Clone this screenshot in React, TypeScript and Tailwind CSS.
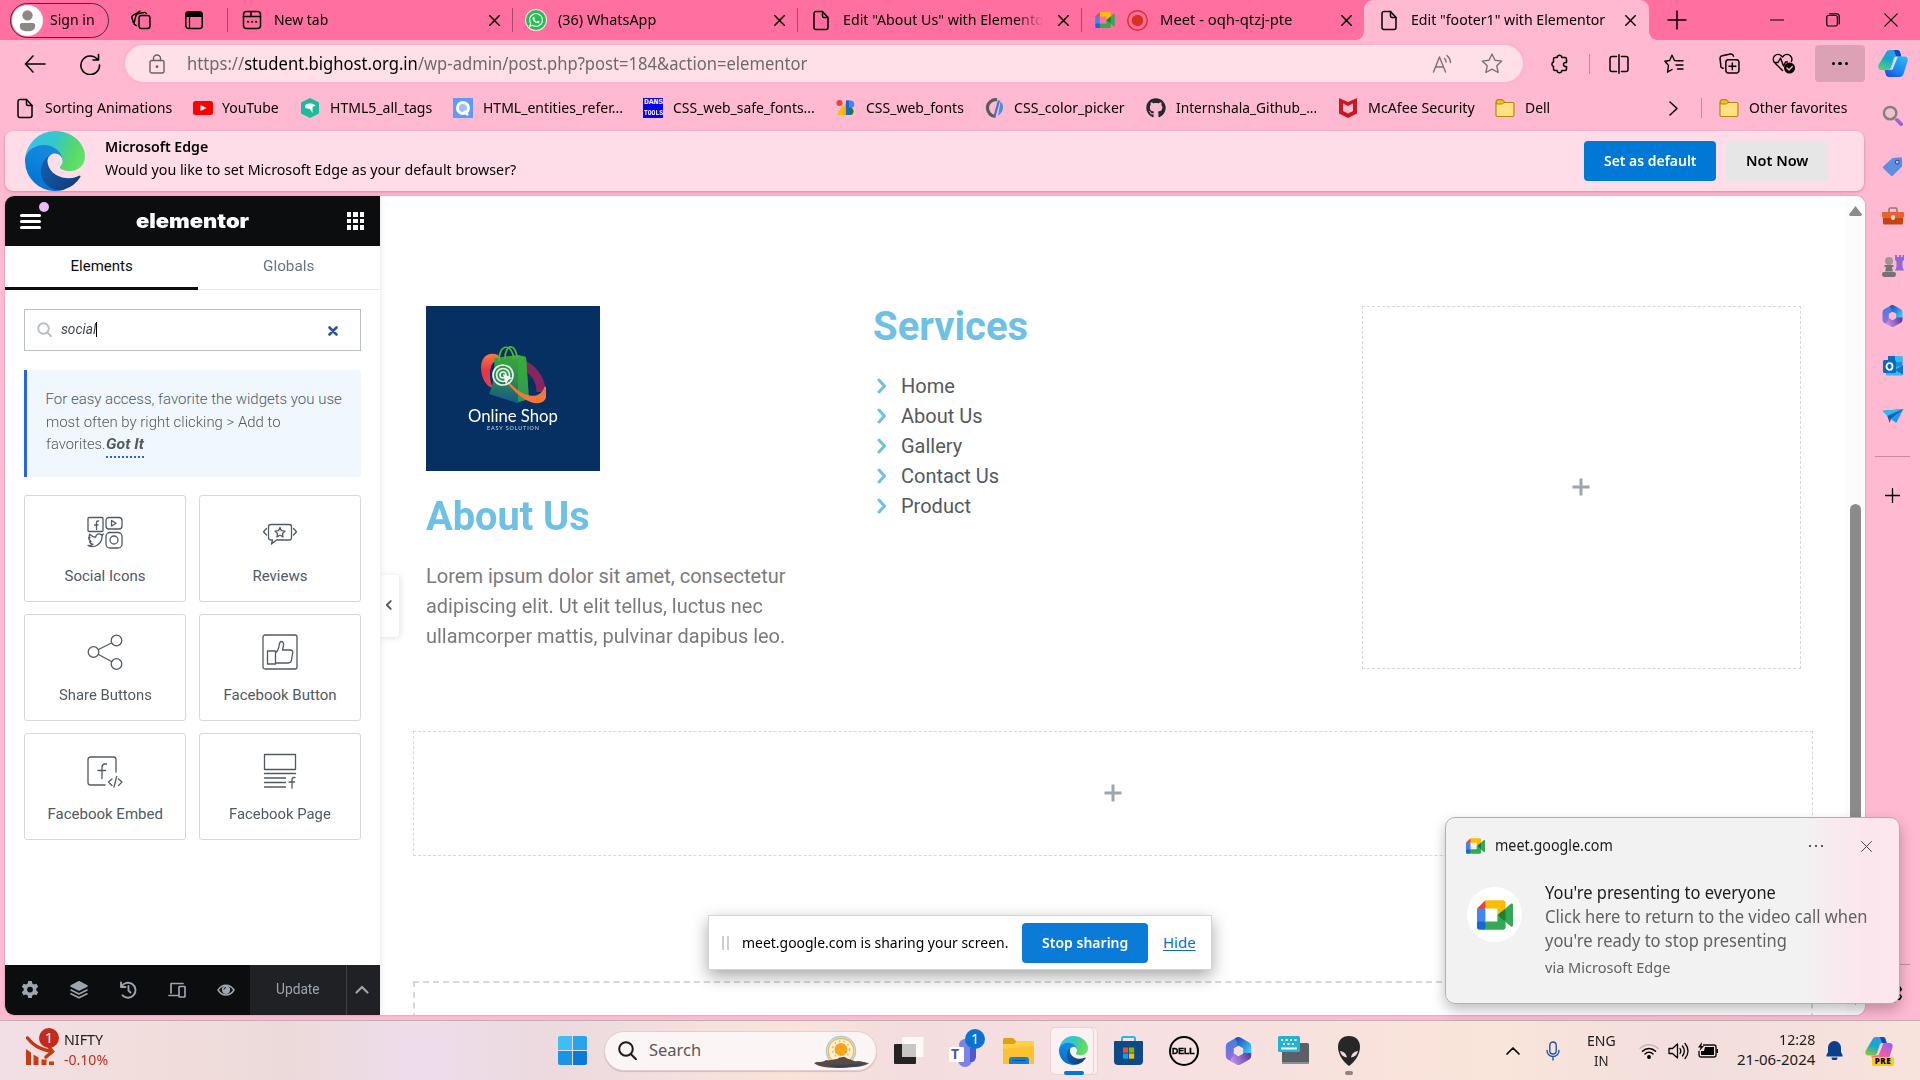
import React, { useLayoutEffect, useRef } from "react";
import { FaGithub, FaWhatsapp } from "react-icons/fa";

/* Single line of text condensed or widened to the width of its box. */
function Fit({ className = "", children }: { className?: string; children: React.ReactNode }) {
  const outer = useRef<HTMLSpanElement>(null);
  const inner = useRef<HTMLSpanElement>(null);
  useLayoutEffect(() => {
    const o = outer.current;
    const i = inner.current;
    if (!o || !i || !i.offsetWidth) return;
    i.style.transform = `scaleX(${o.clientWidth / i.offsetWidth})`;
  }, []);
  return (
    <span ref={outer} className={"fit block shrink-0 whitespace-nowrap " + className}>
      <span ref={inner} className="inline-block origin-left">{children}</span>
    </span>
  );
}

type IconProps = { className?: string; box?: string; sw?: number; children: React.ReactNode };
function Line({ className = "size-5", box = "0 0 20 20", sw = 1.4, children }: IconProps) {
  return (
    <svg viewBox={box} className={"shrink-0 " + className} fill="none" stroke="currentColor" strokeWidth={sw} strokeLinecap="round" strokeLinejoin="round">
      {children}
    </svg>
  );
}

const Cross = ({ className = "size-[11px]" }: { className?: string }) => (
  <Line className={className} box="0 0 11 11" sw={1.5}><path d="M.8.8l9.4 9.4M10.200.8L.8 10.200" /></Line>
);
const Doc = () => (
  <Line className="h-[21px] w-5" box="0 0 20 21" sw={1.5}>
    <path d="M3 3.500a2 2 0 0 1 2-2h6.500l5.500 6v10a2 2 0 0 1-2 2H5a2 2 0 0 1-2-2z" /><path d="M11.500 1.500v4.500a1.500 1.500 0 0 0 1.500 1.500h4" />
  </Line>
);
const Folder = () => (
  <svg viewBox="0 0 20 20" className="size-5 shrink-0">
    <path d="M1 6V3.500A2 2 0 0 1 3 1.500h4.500L9.500 4v2z" fill="#f0c419" stroke="#b8860b" />
    <rect x="1" y="4.500" width="18" height="14" rx="1.500" fill="#ffe083" stroke="#b8860b" strokeWidth="1.200" />
    <path d="M1.500 6h6l2-2-2-2.200H3A1.500 1.500 0 0 0 1.500 3.300z" fill="#f0c419" stroke="#b8860b" />
  </svg>
);

const Edge = ({ className, id }: { className: string; id: string }) => (
  <svg viewBox="0 0 256 256" preserveAspectRatio="none" className={"shrink-0 " + className}>
    <defs>
      <linearGradient id={id + "a"} x1=".2" y1="0" x2="1" y2=".6"><stop stopColor="#1460ad" /><stop offset="1" stopColor="#103f83" /></linearGradient>
      <linearGradient id={id + "b"} x1=".6" y1="0" x2=".3" y2="1"><stop stopColor="#1a8ad8" /><stop offset=".4" stopColor="#0d84dc" /><stop offset="1" stopColor="#0070d0" /></linearGradient>
      <linearGradient id={id + "c"} x1="0" y1=".3" x2="1" y2=".6"><stop stopColor="#35c1f1" /><stop offset=".45" stopColor="#35c8c8" /><stop offset=".8" stopColor="#58d868" /><stop offset="1" stopColor="#62e26a" /></linearGradient>
    </defs>
    <path fill={`url(#${id}a)`} d="M231.050 190.540a93.730 93.730 0 0 1-10.540 4.710 101.870 101.870 0 0 1-35.900 6.460c-47.320 0-88.540-32.550-88.540-74.320A31.480 31.480 0 0 1 112.500 99.900C69.700 101.700 58.700 146.300 58.700 172.440c0 73.880 68.090 81.370 82.760 81.370 7.910 0 19.840-2.300 27-4.560l1.310-.44a128.340 128.340 0 0 0 66.600-52.800 4 4 0 0 0-5.320-5.470z" />
    <path fill={`url(#${id}b)`} d="M105.730 241.420a79.200 79.200 0 0 1-22.740-21.340 80.720 80.720 0 0 1 29.510-120.180c3.120-1.470 8.450-4.130 15.540-4a32.350 32.350 0 0 1 25.690 13 31.880 31.880 0 0 1 6.360 18.660c0-.21 24.460-79.600-80-79.600-43.900 0-80 41.660-80 78.210A130.150 130.150 0 0 0 12.100 182.200a128 128 0 0 0 156.380 67.110 75.550 75.550 0 0 1-62.780-8z" />
    <path fill={`url(#${id}c)`} d="M152.330 148.860c-.81 1.050-3.300 2.500-3.300 5.660 0 2.610 1.700 5.120 4.720 7.230 14.380 10 41.490 8.680 41.560 8.680a59.560 59.560 0 0 0 30.270-8.350A61.380 61.380 0 0 0 256 109.200c.26-22.410-8-37.310-11.340-43.910C223.460 23.840 177.720 0 128 0A128 128 0 0 0 0 126.200c.48-36.540 36.800-66.050 80-66.050 3.500 0 23.460.34 42 10.070 16.340 8.580 24.900 18.940 30.850 29.210 6.180 10.670 7.280 24.150 7.280 29.520s-2.740 13.330-7.800 19.910z" />
  </svg>
);

const Meet = ({ className }: { className: string }) => (
  <svg viewBox="0 0 87.500 72" className={"shrink-0 " + className}>
    <path fill="#188038" d="M49.500 36l8.530 9.750 11.470 7.330 2-17.020-2-16.640-11.690 6.440z" />
    <path fill="#1967d2" d="M0 51.500V66c0 3.315 2.685 6 6 6h14.500l3-10.960-3-9.540-9.950-3z" />
    <path fill="#ea4335" d="M20.500 0L0 20.500l10.550 3 9.950-3 2.950-9.410z" />
    <path fill="#4285f4" d="M20.500 20.500H0v31h20.500z" />
    <path fill="#34a853" d="M82.600 8.680L69.500 19.420v33.660l13.160 10.790c1.970 1.540 4.850.135 4.850-2.370V11c0-2.535-2.945-3.925-4.910-2.320zM49.500 36v15.500h-29V72h43c3.315 0 6-2.685 6-6V53.080z" />
    <path fill="#fbbc04" d="M63.500 0h-43v20.500h29V36l20-16.570V6c0-3.315-2.685-6-6-6z" />
  </svg>
);

const Copilot = ({ className, id, warm = false }: { className: string; id: string; warm?: boolean }) => (
  <svg viewBox="0 0 30 27" className={"shrink-0 " + className}>
    <defs>
      <linearGradient id={id + "a"} x1=".6" y1="0" x2=".2" y2="1"><stop stopColor="#2f9bf0" /><stop offset=".45" stopColor="#10a9c9" /><stop offset="1" stopColor={warm ? "#8cc63f" : "#52d17c"} /></linearGradient>
      <linearGradient id={id + "b"} x1=".8" y1="0" x2=".2" y2="1"><stop stopColor={warm ? "#a35cf0" : "#28b6f6"} /><stop offset=".6" stopColor={warm ? "#f0609a" : "#1a86f2"} /><stop offset="1" stopColor={warm ? "#ff9a52" : "#1c4fd8"} /></linearGradient>
    </defs>
    <path d="M8 2.500A3.500 3.500 0 0 1 11.300 0H19c2 0 2.800 1.300 3.300 3l1 3.500h-4.500c-2 0-2.800 1-3.300 2.700L13 17c-.6 2-1.500 3-3.500 3H3.500C.5 20-.3 17.500.5 15z" fill={`url(#${id}a)`} />
    <path d="M16 0h3c2 0 2.800 1.300 3.300 3l1 3.500h-5z" fill="#1548b8" />
    <path d="M22 27a3.500 3.500 0 0 1-3.300 0H11c-2 0-2.800-1.300-3.300-3l-1.200-4h4c2 0 2.500-1 3-2.700L16 9.500c.6-2 1.500-3 3.500-3h7c3 0 3.800 2.500 3 5L25.300 24.500A3.500 3.500 0 0 1 22 27z" fill={`url(#${id}b)`} />
    <path d="M17 6.800h2.800l-5.300 13H11c1.500-.2 2-1 2.500-2.500z" fill="#ffe6ee" opacity=".85" />
  </svg>
);

const M365 = ({ className, id }: { className: string; id: string }) => (
  <svg viewBox="0 0 26 28" className={"shrink-0 " + className} fill="none" strokeWidth="8" strokeLinejoin="round">
    <defs>
      <linearGradient id={id + "a"} gradientUnits="userSpaceOnUse" x1="6" y1="2" x2="6" y2="24"><stop stopColor="#3f7fe0" /><stop offset="1" stopColor="#9a6ce2" /></linearGradient>
      <linearGradient id={id + "b"} gradientUnits="userSpaceOnUse" x1="10" y1="4" x2="24" y2="14"><stop stopColor="#1f50bd" /><stop offset="1" stopColor="#3ac6f6" /></linearGradient>
      <linearGradient id={id + "c"} gradientUnits="userSpaceOnUse" x1="6" y1="24" x2="24" y2="16"><stop stopColor="#c490ea" /><stop offset="1" stopColor="#5b3c9c" /></linearGradient>
    </defs>
    <path d="M13 4L4.300 9v10L9 21.800" stroke={`url(#${id}a)`} />
    <path d="M21.700 15v4L13 24l-6.500-3.700" stroke={`url(#${id}c)`} />
    <path d="M11.500 4.900L13 4l8.700 5v7" stroke={`url(#${id}b)`} />
  </svg>
);

function Tab({ icon, title, close }: { icon: React.ReactNode; title: React.ReactNode; close?: string }) {
  return (
    <div className="flex h-10 w-full items-center">
      {icon}{title}<Cross className={"ml-auto size-[11px] " + (close ?? "mr-[12px]")} />
    </div>
  );
}

function TabBar() {
  return (
    <div className="flex h-10 shrink-0 items-center bg-[#ff70a0] text-[15px] [&_.fit]:-translate-y-px">
      <div className="ml-[10px] flex h-[35px] w-[99px] items-center rounded-full border-[1.5px] border-[#3c3138]">
        <svg viewBox="0 0 30 30" className="ml-[1px] size-[31px]"><circle cx="15" cy="15" r="15" fill="#fff" /><circle cx="15" cy="10" r="5" fill="#8b8886" /><path d="M7.500 20a2.500 2.500 0 0 1 2.500-2.500h10a2.500 2.500 0 0 1 2.500 2.500c0 3.500-3 5.500-7.500 5.500S7.500 23.500 7.500 20z" fill="#8b8886" /></svg>
        <Fit className="ml-[7px] w-[45px]">Sign in</Fit>
      </div>
      <Line className="ml-[22px] size-5"><rect x="8" y="5.500" width="11" height="13" rx="2.500" /><path d="M5.500 15.500l-1-.3a2.500 2.500 0 0 1-1.300-3L5 5.500a2.500 2.500 0 0 1 1.700-1.700L13 2.500a2 2 0 0 1 2.300 1M2.300 12.500L1 8a2.500 2.500 0 0 1 1.500-3L9 1.200" /></Line>
      <svg viewBox="0 0 20 20" className="ml-[33px] size-5"><rect x="1.800" y="2" width="16.400" height="16.400" rx="2.500" fill="none" stroke="#000" strokeWidth="1.500" /><path d="M1.800 3.500A2.500 2.500 0 0 1 4.300 1.300h11.400a2.500 2.500 0 0 1 2.500 2.500V7H1.800z" /><path d="M5.500 7v11" stroke="#000" strokeWidth="1.300" /></svg>
      <div className="ml-[23px] flex h-6 w-[285px] items-center border-l border-[#a84a6c]">
        <Tab icon={<Line className="ml-[14px] size-5" sw={1.500}><rect x="1.500" y="1.500" width="17" height="17" rx="3" /><path d="M1.500 6.500h17M9 2v4.500" /><path d="M6 11.800h.3M10 11.800h.3M14 11.800h.3" strokeWidth="2" /></Line>} title={<Fit className="ml-[12px] w-[54px]">New tab</Fit>} />
      </div>
      <div className="flex h-6 w-[285px] items-center border-l border-[#a84a6c]">
        <Tab icon={<span className="ml-[13px] flex size-5 items-center justify-center rounded-full bg-[#1fc24c] ring-1 ring-white/80"><FaWhatsapp className="size-4 text-white" /></span>} title={<Fit className="ml-[12px] w-[98px]">(36) WhatsApp</Fit>} />
      </div>
      <div className="flex h-6 w-[284px] items-center border-l border-[#a84a6c]">
        <Tab icon={<span className="ml-[13px] flex"><Doc /></span>} title={<Fit className="ml-[12px] w-[201px] [mask-image:linear-gradient(90deg,#000_85%,transparent_100%)]">Edit "About Us" with Elemento</Fit>} />
      </div>
      <div className="flex h-6 w-[283px] items-center border-l border-[#a84a6c]">
        <Tab icon={<><Meet className="ml-[13px] h-[16px] w-5" /><svg viewBox="0 0 20 20" className="ml-[12px] size-[21px]"><circle cx="10" cy="10" r="9.300" fill="none" stroke="#d93025" strokeWidth="1.300" /><circle cx="10" cy="10" r="5.500" fill="#d93025" /></svg></>} title={<Fit className="ml-[12px] w-[132px]">Meet - oqh-qtzj-pte</Fit>} />
      </div>
      <div className="relative h-10 w-[285px] rounded-t-[9px] bg-[#ffb9d0]">
        <span className="absolute bottom-0 left-[-8px] size-2 bg-[radial-gradient(circle_at_0_0,#ff70a0_7.500px,#ffb9d0_8px)]" />
        <span className="absolute right-[-8px] bottom-0 size-2 bg-[radial-gradient(circle_at_100%_0,#ff70a0_7.500px,#ffb9d0_8px)]" />
        <Tab icon={<span className="ml-[15px] flex"><Doc /></span>} title={<Fit className="ml-[12px] w-[194px]">Edit "footer1" with Elementor</Fit>} close="mr-[13px]" />
      </div>
      <Line className="ml-[18px] size-5" sw={1.500}><path d="M10 1v18M1 10h18" /></Line>
      <Line className="ml-[83px] size-[14px]" box="0 0 14 14" sw={1.200}><path d="M.5 7h13" /></Line>
      <Line className="ml-[42px] size-[14px]" box="0 0 14 14" sw={1.200}><rect x=".8" y="2.500" width="10.500" height="10.500" rx="1.500" /><path d="M3.500.8H11a2.200 2.200 0 0 1 2.200 2.200v8" /></Line>
      <Line className="ml-[44px] size-[14px]" box="0 0 14 14" sw={1.200}><path d="M.8.8l12.400 12.400M13.200.8L.8 13.200" /></Line>
    </div>
  );
}

const Slot = ({ children }: { children: React.ReactNode }) => <div className="flex w-[55px] justify-center">{children}</div>;

function Toolbar() {
  return (
    <div className="flex h-12 shrink-0 items-center bg-[#ffb9d0] pb-px">
      <Line className="ml-[24px] h-[18px] w-[22px]" box="0 0 22 18" sw={1.600}><path d="M21 9H1.500M9 1L1.500 9 9 17" /></Line>
      <Line className="ml-[33px] size-[22px]" box="0 0 22 22" sw={1.600}><path d="M18.500 6.500A9.300 9.300 0 1 0 20.500 12M19.500 1.500v5.500H14" /></Line>
      <div className="ml-[24px] flex h-[37px] w-[1398px] items-center rounded-full bg-[#ffe0e9] shadow-[0_0_4px_rgba(200,80,120,0.150)]">
        <Line className="ml-[24px] h-[20px] w-4 text-[#6b6064]" box="0 0 16 20"><rect x="1" y="6.500" width="14" height="12.500" rx="2" /><path d="M4.500 6.500V4.500a3.500 3.500 0 0 1 7 0v2" /><circle cx="8" cy="12.700" r=".7" fill="currentColor" /></Line>
        <Fit className="ml-[22px] w-[620px] text-[17.500px] text-[#6d6a6c]">https://<span className="text-black">student.bighost.org.in</span>/wp-admin/post.php?post=184&amp;action=elementor</Fit>
        <Line className="ml-auto h-[20px] w-[21px] text-[#7a7174]" box="0 0 21 20"><path d="M1.500 18L7.500 3l6 15M3.500 13h8M12.500 4.500c1 .9 1.500 2 1.600 3.500M15 1.500c2.200 1.900 3.300 4 3.500 7" /></Line>
        <Line className="mr-[20px] ml-[28px] h-[21px] w-[22px] text-[#7a7174]" box="0 0 22 21"><path d="M11 1l3 6.200 6.800.9-5 4.700 1.300 6.700L11 16.200l-6.100 3.300 1.300-6.700-5-4.700L8 7.200z" /></Line>
      </div>
      <Line className="ml-[26px] size-5" sw={1.500}><path d="M7 3.500h1.200a2.300 2.300 0 0 1 4.600 0h3.200a1.500 1.500 0 0 1 1.500 1.500v3.500h-1a2 2 0 0 0 0 4h1V15a1.500 1.500 0 0 1-1.500 1.500h-3.200a2.300 2.300 0 0 1-4.600 0H6A1.500 1.500 0 0 1 4.500 15v-2.500a2.400 2.400 0 0 1 0-4.500V5A1.500 1.500 0 0 1 6 3.500z" /></Line>
      <span className="ml-[20px] h-5 w-px bg-[#c98aa1]" />
      <span className="w-[1.500px]" />
      <Slot><Line sw={1.500}><path d="M7.500 2.500H3a2 2 0 0 0-2 2v11a2 2 0 0 0 2 2h4.500M12.500 2.500H17a2 2 0 0 1 2 2v11a2 2 0 0 1-2 2h-4.500M10 .8v18.400" /></Line></Slot>
      <Slot><Line><path d="M13.500 6.800l-3-.3L8 1.200 5.600 6.500.9 7.200l3.600 4.200-1 6.800L8 15.500M13.500 6.800H19M12 11h7M13.500 15H19" /></Line></Slot>
      <Slot><Line className="size-[21px]"><rect x="6.500" y="6.500" width="12.500" height="12.500" rx="2.500" /><path d="M12.700 9.500v6.500M9.500 12.700H16M4 14.500l-.8-.2a2 2 0 0 1-1.500-2.500L1 5.500a2.500 2.500 0 0 1 2-2.800L11 1a2.500 2.500 0 0 1 2.800 2" /></Line></Slot>
      <Slot><Line className="h-[21px] w-6" box="0 0 24 21"><path d="M10.500 17.500L2.700 9.800A5 5 0 0 1 2.500 3a5 5 0 0 1 7 0l1 1 1-1a5 5 0 0 1 7 0 5 5 0 0 1 .9 5.500M2.500 9.500h3.500L8.500 5l3 8 2-4h2" /><circle cx="17.500" cy="15" r="5.500" fill="#000" stroke="none" /><path d="M15 15l2 2 3.300-3.500" stroke="#ffb9d0" /></Line></Slot>
      <div className="ml-[3.500px] flex h-[37px] w-[50px] items-center justify-center gap-[3px] rounded-[4px] bg-[#dda1b5]"><i className="size-[3.500px] rounded-full bg-black" /><i className="size-[3.500px] rounded-full bg-black" /><i className="size-[3.500px] rounded-full bg-black" /></div>
      <Copilot className="ml-[13px] h-[27px] w-[30px]" id="cp" />
    </div>
  );
}

function Bookmarks() {
  const items: { icon: React.ReactNode; text: string; w: string }[] = [
    { icon: <Doc />, text: "Sorting Animations", w: "w-[127px]" },
    { icon: <svg viewBox="0 0 20 20" className="size-5"><rect y="3" width="20" height="14" rx="2.500" fill="#f00" /><path d="M7.500 7l6 3-6 3z" fill="#fff" /></svg>, text: "YouTube", w: "w-[57px]" },
    { icon: <svg viewBox="0 0 20 20" className="size-5"><path d="M10 0l9 4.500v11L10 20l-9-4.500v-11z" fill="#1abc9c" /><path d="M5 9c0-3 3-4 6-3.500 2 .2 4 1 4.500 2.500-1.500 0-2.500.5-3 1.500v5.500L9.500 10.500C8 11 6 10.500 5 9z" fill="#fff" /></svg>, text: "HTML5_all_tags", w: "w-[102px]" },
    { icon: <svg viewBox="0 0 20 20" className="size-5"><rect width="20" height="20" fill="#5c9cf8" /><circle cx="10" cy="10" r="5.500" fill="#9cc0f8" stroke="#fff" strokeWidth="3" /><path d="M11 13l4 4" stroke="#fff" strokeWidth="2.500" /></svg>, text: "HTML_entities_refer...", w: "w-[140px]" },
    { icon: <span className="flex size-5 flex-col items-center justify-between bg-[#0500f0] font-['Liberation_Mono'] text-[8px] leading-[9px] font-bold text-white"><Fit className="w-[19px]">DANS</Fit><Fit className="w-[19px]">TOOLS</Fit></span>, text: "CSS_web_safe_fonts...", w: "w-[142px]" },
    { icon: <svg viewBox="0 0 20 20" className="size-5"><circle cx="3.500" cy="5" r="3" fill="#ea4335" /><path d="M1 17L7 6l3 11z" fill="#fbbc04" /><path d="M6.500 17l3-13H13v13z" fill="#f9ab00" /><path d="M10 2.500h4.500a3.700 3.700 0 0 1 0 7.500H10z" fill="#4285f4" /><path d="M10 9.500h5a4 4 0 0 1 0 7.500h-5z" fill="#188038" /><path d="M10 2.500h3V17h-3z" fill="#1967d2" /></svg>, text: "CSS_web_fonts", w: "w-[98px]" },
    { icon: <svg viewBox="0 0 20 20" className="size-5" fill="none"><path d="M12 1.800a8.300 8.300 0 1 0-1.500 16.500" stroke="#5a5a5e" strokeWidth="3.200" /><path d="M14 2.500L9.500 18.500" stroke="#3d78c8" strokeWidth="2.200" /><path d="M15.500 3.500c4 3 3.500 10-2.500 14.500z" fill="#4a90d8" /></svg>, text: "CSS_color_picker", w: "w-[111px]" },
    { icon: <FaGithub className="size-5 text-[#24292f]" />, text: "Internshala_Github_...", w: "w-[141px]" },
    { icon: <svg viewBox="0 0 20 20" className="size-5"><path d="M1 0l9 4 9-4v15.500L10 20l-9-4.500z" fill="#c8191f" /><path d="M5 5.500l5 2.500 5-2.500v7.500L10 15.500 5 13z" fill="#ffb9d0" /></svg>, text: "McAfee Security", w: "w-[107px]" },
    { icon: <Folder />, text: "Dell", w: "w-[25px]" },
  ];
  return (
    <div className="flex h-[43px] items-center gap-[20.800px] pb-[3px] pl-[15px] text-[15px] [&_.fit]:-translate-y-px">
      {items.map((b) => (
        <div key={b.text} className="flex items-center gap-[9.800px]">{b.icon}<Fit className={b.w}>{b.text}</Fit></div>
      ))}
      <Line className="ml-auto h-[15px] w-[9px]" box="0 0 9 15" sw={1.500}><path d="M1 1l7 6.500L1 14" /></Line>
      <span className="ml-[2px] h-5 w-px bg-[#c98aa1]" />
      <div className="mr-[18px] ml-[-4px] flex items-center gap-[10px]"><Folder /><Fit className="w-[98px]">Other favorites</Fit></div>
    </div>
  );
}

function InfoBar() {
  return (
    <div className="ml-[5px] flex h-[60px] w-[1859px] shrink-0 items-center rounded-[8px] bg-[#ffdde8] text-[15px] shadow-[0_1px_3px_rgba(120,40,70,0.350)]">
      <Edge className="ml-5 size-[60px]" id="e1" />
      <div className="ml-5 flex flex-col gap-px pb-[7px]">
        <Fit className="w-[103px] leading-[22px] font-semibold">Microsoft Edge</Fit>
        <Fit className="w-[411px] leading-[22px]">Would you like to set Microsoft Edge as your default browser?</Fit>
      </div>
      <div className="mr-[36px] ml-auto flex gap-[10px] font-semibold [&_.fit]:-translate-y-px">
        <div className="flex h-10 w-[132px] items-center justify-center rounded-[4px] bg-[#0078d6] text-white"><Fit className="w-[93px]">Set as default</Fit></div>
        <div className="flex h-10 w-[102px] items-center justify-center rounded-[4px] bg-[#e6e6e6]"><Fit className="w-[62px]">Not Now</Fit></div>
      </div>
    </div>
  );
}

const widgets: { name: string; w: string; icon: React.ReactNode }[] = [
  { name: "Social Icons", w: "w-[81px]", icon: <><rect x="1" y="2.500" width="15" height="14" rx="1" /><path d="M11.500 6h-.5a1.500 1.500 0 0 0-1.500 1.500v7M7.500 10h3.500" /><rect x="19" y="2.500" width="16" height="11.500" rx="3" /><path d="M24.500 5.500v5.500l4.500-2.700z" /><rect x="19" y="17.500" width="16" height="15.500" rx="4" /><circle cx="27" cy="25" r="4" /><path d="M1 30.500c2.500.3 4-.2 5-1.200-2-.3-3-1.300-3.300-2.800H4C2.500 25.500 1.500 24 1.700 22.500l1.300.3c-1-1.500-1.200-2.500-.3-3.500 2 2 4 2.800 6 3 0-3 3.500-4.500 5.500-2.500l2-.8-1.200 2.300c.2 7.500-7.500 12.500-14 9.200z" /></> },
  { name: "Reviews", w: "w-[55px]", icon: <><path d="M9 9.500h18a2.500 2.500 0 0 1 2.500 2.500v10.500A2.500 2.500 0 0 1 27 25H14.500L9.500 29l1-4H9a2.500 2.500 0 0 1-2.500-2.500V12A2.500 2.500 0 0 1 9 9.500zM4.500 13.500l-3 3.200 3 3.300M31.500 13.500l3 3.200-3 3.300" /><path d="M18 12.500l1.500 3.200 3.500.4-2.500 2.400.6 3.400L18 20.200l-3.100 1.700.6-3.400L13 16.100l3.500-.4z" /></> },
  { name: "Share Buttons", w: "w-[93px]", icon: <><circle cx="6.500" cy="18" r="5.300" /><circle cx="29.500" cy="6.500" r="5.300" /><circle cx="29.500" cy="30" r="5.300" /><path d="M11.500 15.500L24.500 9M11.500 20.500l13 7" /></> },
  { name: "Facebook Button", w: "w-[113px]", icon: <><rect x="1" y="1" width="34" height="34" rx="2" /><path d="M5.500 17h8v13h-8zM13.500 19c3-2 3-4 3.500-7 .3-2.500 1-4.500 2.500-4.500 2 0 2.500 2.500 1.800 5l-.8 3.500h8c1.500 0 2.500 1 2.300 2.500L29.500 26c-.3 2-1.300 3-3.300 3H13.500" /></> },
  { name: "Facebook Embed", w: "w-[115px]", icon: <><path d="M18 32H3.500A2.500 2.500 0 0 1 1 29.500v-23A2.500 2.500 0 0 1 3.500 4h23A2.500 2.500 0 0 1 29 6.500V19" /><path d="M19.500 11h-1.500a3 3 0 0 0-3 3v11.500M11 17.500h7.500M25 26l-3.500 3 3.500 3.500M31.500 26l3.500 3-3.500 3.500M29.700 23.500L27 34" /></> },
  { name: "Facebook Page", w: "w-[102px]", icon: <><path d="M2.500 1.500h31v15h-31zM2.500 20.500h31M2.500 25h21M2.500 29.500h21M2.500 34h21M33 24.500h-1a2 2 0 0 0-2 2V35M27 29h5.500" /></> },
];

function Panel() {
  return (
    <div className="z-10 flex w-[375px] shrink-0 flex-col bg-white font-['Roboto'] shadow-[0_0_6px_rgba(0,0,0,0.120)]">
      <div className="relative flex h-[50px] items-center justify-between bg-[#0c0d0e] pr-4 pl-[15px] text-white">
        <div className="flex w-[21px] flex-col gap-[3px]"><i className="h-[3px] rounded bg-white" /><i className="h-[3px] rounded bg-white" /><i className="h-[3px] rounded bg-white" /></div>
        <span className="absolute top-[6px] left-[34px] size-[10px] rounded-full bg-[#f0b8fa]" />
        <Fit className="-mt-px -ml-[3px] w-[113px] font-['Inter'] text-[20px] font-black">elementor</Fit>
        <div className="grid grid-cols-3 gap-[2px]">{Array.from({ length: 9 }, (_, i) => <i key={i} className="size-[4.500px] bg-white" />)}</div>
      </div>
      <div className="flex h-[44px] text-[15px]">
        <div className="flex w-[193px] justify-center border-b-[3px] border-[#0c0d0e] pt-[9px] text-[#0c0d0e]"><Fit className="w-[62px]">Elements</Fit></div>
        <div className="flex grow justify-center border-b border-[#e6e8ea] pt-[9px] pr-px text-[#69727d]"><Fit className="w-[51px]">Globals</Fit></div>
      </div>
      <div className="mx-[19px] mt-[19px] flex h-[42px] items-center border border-[#babfc5]">
        <Line className="mr-[9px] mb-px ml-[12px] size-[15px] text-[#babfc5]" box="0 0 15 15" sw={1.900}><circle cx="6.500" cy="6.500" r="5.300" /><path d="M10.800 11l3 3" /></Line>
        <Fit className="w-[35px] pb-px text-[14.500px] text-[#3f444b] italic">social</Fit>
        <span className="mb-[2px] h-[15px] w-px bg-black" />
        <Line className="mt-[2px] mr-[22px] ml-auto size-[10px] text-[#2f5594]" box="0 0 10 10" sw={2.600}><path d="M1.500 1.500l7 7M8.500 1.500l-7 7" /></Line>
      </div>
      <div className="mx-[19px] mt-[19px] h-[107px] rounded-r-[3px] border-l-[3px] border-[#2563eb] bg-[#f0f7ff] pt-[18px] pl-[18.500px] text-[15px] leading-[22.500px] font-light text-[#515962]">
        <Fit className="w-[296px]">For easy access, favorite the widgets you use</Fit>
        <Fit className="w-[235px]">most often by right clicking &gt; Add to</Fit>
        <div className="flex"><Fit className="w-[60px]">favorites.</Fit><Fit className="h-[25px] w-[38px] border-b-2 border-dotted border-[#2563eb] font-bold italic">Got It</Fit></div>
      </div>
      <div className="mx-[19px] mt-[18px] grid grid-cols-2 gap-x-[13px] gap-y-[12.500px]">
        {widgets.map((w) => (
          <div key={w.name} className="flex h-[106.500px] flex-col items-center rounded-[3px] border border-[#d5d8dc] pt-[18.500px] text-[15px] text-[#515962]">
            <Line className="size-9" box="0 0 36 36" sw={1.300}>{w.icon}</Line>
            <Fit className={"mt-[14px] " + w.w}>{w.name}</Fit>
          </div>
        ))}
      </div>
      <div className="mt-auto flex h-[50px] items-center bg-[#0c0d0e] text-[#9da5ae]">
        <div className="flex w-[49px] justify-center pb-px"><svg viewBox="0 0 18 18" className="size-[18px]" fill="currentColor"><path fillRule="evenodd" d="M7.200 0h3.600l.5 2.500 1.700 1L15.400 2.700l1.800 3.100-1.900 1.700v2l1.900 1.700-1.800 3.100-2.400-.8-1.700 1-.5 2.500H7.200l-.5-2.500-1.700-1-2.400.8L.8 11.200l1.900-1.700v-2L.8 5.800l1.800-3.100 2.400.8 1.700-1zM9 5.700a2.900 2.900 0 1 0 0 5.800 2.900 2.900 0 0 0 0-5.800z" /></svg></div>
        <div className="flex w-[49px] justify-center pb-px"><Line className="size-[18px]" box="0 0 18 18" sw={1.600}><path d="M9 .8L17 5 9 9 1 5z" fill="currentColor" /><path d="M1 9l8 4 8-4M1 12.800l8 4 8-4" /></Line></div>
        <div className="flex w-[49px] justify-center pb-px"><Line className="size-[18px]" box="0 0 18 18" sw={1.900}><path d="M2.500 5.500a7.500 7.500 0 1 1 1 8.800M2 1.500v4.500h4.500M9.500 5v4.500l2 2" /></Line></div>
        <div className="flex w-[49px] justify-center pb-px"><Line className="size-[18px]" box="0 0 18 18" sw={1.700}><path d="M3 12V2.500h12M1 14.500h8.500" /><rect x="11" y="5.500" width="6" height="10.500" rx=".5" /></Line></div>
        <div className="flex w-[49px] justify-center pb-px"><svg viewBox="0 0 18 18" className="size-[18px]"><path d="M1 9c4-6.500 12-6.500 16 0-4 6.500-12 6.500-16 0z" fill="none" stroke="currentColor" strokeWidth="1.500" /><circle cx="9" cy="8.800" r="4.200" fill="currentColor" /><path d="M7 8.500A2 2 0 0 1 9 6.500" stroke="#0c0d0e" fill="none" /></svg></div>
        <div className="flex h-full w-[96px] items-center justify-center bg-[#1f2124] pb-px text-[15px]"><Fit className="w-[44px]">Update</Fit></div>
        <div className="flex h-full w-[34px] items-center justify-center border-l border-[#3f444b] bg-[#1f2124] pr-[3px] pb-[2px]"><Line className="h-[9px] w-[14px]" box="0 0 14 9" sw={2.200}><path d="M1.500 7.500L7 2l5.500 5.500" /></Line></div>
      </div>
    </div>
  );
}

const Logo = () => (
  <div className="flex h-[165px] w-[174px] flex-col items-center bg-[#053061] pt-[39px] text-white">
    <svg viewBox="0 0 66 60" className="h-[60px] w-[66px]">
      <defs>
        <linearGradient id="ring" x1="0" y1="0" x2="0" y2="1"><stop stopColor="#ff7a3c" /><stop offset=".5" stopColor="#e8324a" /><stop offset="1" stopColor="#e0405a" /></linearGradient>
        <linearGradient id="bag" x1=".5" y1="0" x2=".4" y2="1"><stop stopColor="#3aa83c" /><stop offset=".5" stopColor="#2c8c4c" /><stop offset="1" stopColor="#14568c" /></linearGradient>
      </defs>
      <path d="M18 10C9 6 1 11 1 23c0 9 5 19 12 20-3-6-4-15-2-21 1-4 4-7 9-8z" fill="url(#ring)" />
      <path d="M44 20c11 6 17 16 17 27" fill="none" stroke="#8a2460" strokeWidth="9" />
      <path d="M14 13l24-3 8 2 3 42-12 4-28-9c5-10 6-24 5-36z" fill="url(#bag)" />
      <path d="M38 10l8 2 3 42-11 3z" fill="#38b03c" opacity=".65" />
      <path d="M19 16C19-2 32-2 34 14M25 14c0-16 11-16 12-1" fill="none" stroke="#55b436" strokeWidth="1.700" />
      <path d="M65.500 42c4 22-17 20-37-4 11 13 24 16 31 12 4-2 5-5 6-8z" fill="#f5763c" stroke="#f5763c" strokeWidth="2" />
      <g fill="none" stroke="#e8f4ee" strokeWidth="1.700"><circle cx="23" cy="30" r="10" /><circle cx="23" cy="30" r="6.500" /><circle cx="23" cy="30" r="3" /></g>
      <path d="M23 29l9 4-4 2-2 5z" fill="#fff" />
    </svg>
    <Fit className="mt-px w-[90px] font-['Lato'] text-[16.500px] leading-[20px]">Online Shop</Fit>
    <Fit className="-mt-px w-[53px] font-['Lato'] text-[6px] leading-[6px] tracking-[1px] text-white/80">EASY SOLUTION</Fit>
  </div>
);

const Plus = () => <Line className="mr-px mb-[2px] size-[18px] text-[#9da5ae]" box="0 0 18 18" sw={3}><path d="M9 .5v17M.5 9h17" strokeLinecap="butt" /></Line>;

function Canvas() {
  return (
    <div className="relative grow overflow-hidden bg-white font-['Roboto'] text-[20px]">
      <div className="flex pt-[110px] pl-[46px]">
        <div className="w-[448px]">
          <Logo />
          <Fit className="mt-[22px] w-[164px] text-[40px] leading-[48px] font-bold text-[#6ec1e4]">About Us</Fit>
          <div className="mt-[20px] leading-[30px] text-[#7a7a7a]">
            <Fit className="w-[359px]">Lorem ipsum dolor sit amet, consectetur</Fit>
            <Fit className="w-[337px]">adipiscing elit. Ut elit tellus, luctus nec</Fit>
            <Fit className="w-[359px]">ullamcorper mattis, pulvinar dapibus leo.</Fit>
          </div>
        </div>
        <div className="-mt-[3px] w-[488px]">
          <Fit className="-ml-px w-[155px] text-[40px] leading-[48px] font-bold text-[#6ec1e4]">Services</Fit>
          <ul className="mt-[20px] leading-[30px] text-[#54595f]">
            {[["Home", "w-[54px]"], ["About Us", "w-[82px]"], ["Gallery", "w-[61px]"], ["Contact Us", "w-[98px]"], ["Product", "w-[70px]"]].map(([t, w]) => (
              <li key={t} className="flex items-center">
                <Line className="mr-[14px] ml-[3px] h-[16px] w-[10px] text-[#6ec1e4]" box="0 0 10 16" sw={3}><path d="M2 2l5.500 6L2 14" /></Line>
                <Fit className={w}>{t}</Fit>
              </li>
            ))}
          </ul>
        </div>
        <div className="flex h-[363px] w-[439px] items-center justify-center border border-dashed border-[#d5d8dc]"><Plus /></div>
      </div>
      <div className="mt-[62px] ml-[33px] flex h-[125px] w-[1400px] items-center justify-center border border-dashed border-[#d5d8dc]"><Plus /></div>
      <div className="mt-[125px] ml-[33px] h-[60px] w-[1400px] border-2 border-dashed border-[#d5d8dc]" />
      <div className="absolute top-[379px] left-0 flex h-[62px] w-[19px] items-center justify-center rounded-r-[3px] bg-white pr-[2px] pb-[3px] shadow-[1px_1px_6px_rgba(0,0,0,0.120)]"><Line className="h-[10px] w-[7px] text-[#515962]" box="0 0 6 9" sw={1.700}><path d="M5 1L1.500 4.500 5 8" /></Line></div>
    </div>
  );
}

function SideBar() {
  return (
    <div className="flex w-[55px] flex-col items-center pt-[2px] [&>div]:flex [&>div]:h-[50px] [&>div]:items-center">
      <div><svg viewBox="0 0 22 22" className="size-[21px]"><circle cx="8.500" cy="8.500" r="6.500" fill="#eec3d1" stroke="#85807f" strokeWidth="2.600" /><path d="M14 14.500l1.500 1.500" stroke="#777" strokeWidth="2" /><path d="M16 16l4 4" stroke="#9a63dc" strokeWidth="4" strokeLinecap="round" /></svg></div>
      <div><svg viewBox="0 0 22 22" className="mt-[2px] size-[21px]"><path d="M11 2l8.500-.8A1.500 1.500 0 0 1 21 2.700V11l-9.500 9.500a1.500 1.500 0 0 1-2.300 0L1.500 13a1.500 1.500 0 0 1 0-2.200z" fill="#5c8fe2" /><circle cx="16" cy="6.500" r="2" fill="#b8c8f0" stroke="#34489c" strokeWidth="1.200" /></svg></div>
      <div><svg viewBox="0 0 22 18" className="mt-[2px] h-[18px] w-[22px]"><path d="M7 5V2.500A1.500 1.500 0 0 1 8.500 1h5A1.500 1.500 0 0 1 15 2.500V5" fill="none" stroke="#8a7c7c" strokeWidth="1.600" /><rect y="5" width="22" height="5.500" rx="1" fill="#e8622a" /><path d="M1 10.500h20V16a1.500 1.500 0 0 1-1.500 1.500h-17A1.500 1.500 0 0 1 1 16z" fill="#c8420f" /><rect x="9" y="8" width="4" height="5" rx="2" fill="#ddd" /></svg></div>
      <div><svg viewBox="0 0 22 22" className="mt-[2px] size-[22px]"><path d="M13 0h2v2h2V0h2v2h1.500V0H22v5l-1.500 1.500V12L22 15.500h-9L14.500 12V6.500L13 5z" fill="#9268d8" /><circle cx="7" cy="6" r="4" fill="#9a9896" /><path d="M2.500 10h9v2H10l.8 4.500H3.200L4 12H2.500zM0 19a2 2 0 0 1 2-2h10a2 2 0 0 1 2 2c0 2-1 3-2 3H2c-1 0-2-1-2-3z" fill="#757371" /></svg></div>
      <div><M365 className="mt-[2px] h-[22px] w-[21px]" id="m1" /></div>
      <div><svg viewBox="0 0 20 20" className="mt-[2px] size-5"><path d="M5 0h13a1.500 1.500 0 0 1 1.500 1.500V12H5z" fill="#1490df" /><path d="M5 0h7v6H5z" fill="#0f6cbd" /><path d="M12 0h6a1.500 1.500 0 0 1 1.500 1.500V6H12z" fill="#32bdf5" /><path d="M3 19.500V14l17-5v9a1.500 1.500 0 0 1-1.500 1.500z" fill="#35b8f1" /><path d="M20 9v9.500L12 14z" fill="#1373c9" /><rect y="4" width="13" height="13" rx="1.500" fill="#0a68c0" /><ellipse cx="6.500" cy="10.500" rx="3" ry="3.300" fill="none" stroke="#fff" strokeWidth="1.800" /></svg></div>
      <div><svg viewBox="0 0 22 18" className="mt-[2px] h-[17px] w-[22px]"><path d="M0 3L22 1 14.500 16 8 11z" fill="#1e9be8" /><path d="M0 3L22 1 5 8.500z" fill="#35b4f0" /><path d="M5 8.500L22 1 9 11l-1.500 5z" fill="#0b62ae" /></svg></div>
      <span className="mt-[16px] h-px w-[35px] shrink-0 bg-[#c98aa1]" />
      <Line className="mt-[31px] size-[15px]" box="0 0 15 15" sw={1.300}><path d="M7.500.5v14M.5 7.500h14" /></Line>
      <span className="mt-[461px] h-px w-[35px] shrink-0 bg-[#c98aa1]" />
      <Line className="mt-[18px] size-5" sw={1.500}><circle cx="10" cy="10" r="3" /><path d="M8.500 1h3l.5 2.500 1.800 1L16.500 3.500l1.800 3-1.900 2v3l1.900 2-1.800 3-2.700-1-1.800 1-.5 2.500h-3" /></Line>
    </div>
  );
}

function SharePopup() {
  return (
    <div className="absolute top-[915px] left-[708px] z-20 flex h-[55px] w-[504px] items-center border border-[#d4d4d4] bg-white text-[15px] shadow-[0_6px_16px_rgba(0,0,0,0.350)]">
      <span className="ml-[13px] h-[14px] w-[7px] border-x-2 border-[#cfcfcf]" />
      <Fit className="ml-[13px] w-[266px]">meet.google.com is sharing your screen.</Fit>
      <div className="ml-[14px] flex h-10 w-[126px] items-center justify-center rounded-[4px] bg-[#0b7bd8] font-semibold text-white"><Fit className="w-[86px]">Stop sharing</Fit></div>
      <Fit className="ml-[15px] w-[33px] text-[#0b6fc8]"><u className="underline-offset-2">Hide</u></Fit>
    </div>
  );
}

function Toast() {
  return (
    <div className="absolute top-[817px] left-[1445px] z-20 h-[187px] w-[455px] rounded-[10px] border border-[#b4aeb0] bg-[linear-gradient(90deg,#f2f2f2_0%,#f2f2f2_79%,#f8eaef_86%,#fce6ee_92%,#fce7ee_100%)] shadow-[0_6px_14px_rgba(0,0,0,0.250)]">
      <div className="mt-[12px] flex h-8 items-center text-[15.500px] text-[#1c1c1c]">
        <Meet className="ml-[20px] h-[16px] w-[19px]" />
        <Fit className="ml-[10px] w-[118px]">meet.google.com</Fit>
        <span className="ml-auto flex gap-[4px]"><i className="size-[2px] bg-[#555]" /><i className="size-[2px] bg-[#555]" /><i className="size-[2px] bg-[#555]" /></span>
        <Line className="mr-[27px] ml-[38px] size-[11px] text-[#444]" box="0 0 11 11" sw={1}><path d="M.5.5l10 10M10.500.5l-10 10" /></Line>
      </div>
      <div className="mt-[19px] flex">
        <div className="mt-[6px] ml-[21px] flex size-[55px] items-center justify-center rounded-full bg-white"><Meet className="ml-px h-[30px] w-[36px]" /></div>
        <div className="ml-[23px] text-[17.500px] leading-[24px] text-[#616161]">
          <Fit className="w-[231px] leading-[23px] text-[#1c1c1c]">You're presenting to everyone</Fit>
          <Fit className="w-[323px]">Click here to return to the video call when</Fit>
          <Fit className="w-[242px]">you're ready to stop presenting</Fit>
          <Fit className="mt-[3px] w-[125px] text-[15px]">via Microsoft Edge</Fit>
        </div>
      </div>
    </div>
  );
}

function TaskBar() {
  return (
    <div className="flex h-[60px] shrink-0 items-center border-t border-[#bcb0b3] bg-[linear-gradient(90deg,#f1dfe6_0%,#f1dedb_8%,#ecdadb_15%,#eedceb_22%,#ecdade_29%,#f2dede_34%,#f9e3d8_41%,#f3dddf_47%,#f6e0e2_60%,#f8e2dc_70%,#fae5da_78%,#f2dedd_88%,#f8e3dc_100%)] text-[15px]">
      <div className="relative ml-[26px] h-[30px] w-[29px]">
        <svg viewBox="0 0 29 30" className="size-full"><path d="M1.500 2C7 9 13 13 26 15.500M20 21l6.500-5.500-3-4" fill="none" stroke="#c03a12" strokeWidth="3.500" strokeLinecap="round" /><path d="M0 13l5 3.500V29H0zM7.500 18.500l5 3V29h-5zM15.500 23.500h5V29h-5zM23 25.500h5V29h-5z" fill="#cc3c14" /></svg>
        <span className="absolute -top-[8px] left-[13px] flex size-5 items-center justify-center rounded-full bg-[#c42b1c] text-[14px] text-white">1</span>
      </div>
      <div className="-mt-[4px] ml-[9px] leading-[20px]"><Fit className="w-[39px] text-[#1c1c1c]">NIFTY</Fit><Fit className="w-[44px] text-[#c42b1c]">-0.10%</Fit></div>
      <div className="ml-[450px] grid size-[29px] grid-cols-2 gap-px"><i className="rounded-tl-[2px] bg-[#3fbdf6]" /><i className="rounded-tr-[2px] bg-[#27a4ec]" /><i className="rounded-bl-[2px] bg-[#1a94e4]" /><i className="rounded-br-[2px] bg-[#0a7ad8]" /></div>
      <div className="ml-[17px] flex h-10 w-[273px] items-center rounded-full border border-[#e3cfcf] bg-[#fcf5f5] shadow-[0_1px_1px_rgba(0,0,0,0.150)]">
        <Line className="ml-[13px] size-[19px] text-[#1c1c1c]" box="0 0 19 19" sw={2}><circle cx="8" cy="8" r="6.800" /><path d="M13 13.200l5 5" /></Line>
        <Fit className="ml-[12px] w-[52px] text-[16.500px] text-[#5c5757]">Search</Fit>
        <svg viewBox="0 0 56 34" className="mr-[6px] ml-auto h-[34px] w-[56px]"><circle cx="27" cy="17" r="14.500" fill="#fff4e0" stroke="#a5cfe0" strokeWidth="1.500" /><circle cx="27" cy="17" r="12.800" fill="#fdf0dc" stroke="#f7ba55" strokeWidth="1.500" /><circle cx="27" cy="15.500" r="6.500" fill="#f9a51c" /><circle cx="27" cy="15.500" r="8.500" fill="none" stroke="#f9b840" strokeWidth="1.800" strokeDasharray="1.500 3.200" /><path d="M0 29c4-2 8 0 12-3 5 1 7-1 11-1 4-2 7-3 11 0 3 0 5 3 9 2 4 0 6 1 12 2-4 4-14 4-27 5C14 34 4 33 0 29z" fill="#5b4a44" /><path d="M14 31c12 0 24-1 38-2-5 3-14 4-24 4-6 0-10 0-14-2z" fill="#33465c" /></svg>
      </div>
      <div className="ml-[4px] flex [&>div]:relative [&>div]:flex [&>div]:h-12 [&>div]:w-[55px] [&>div]:items-center [&>div]:justify-center">
        <div><svg viewBox="0 0 30 29" className="h-[29px] w-[30px]"><rect y="8" width="22" height="20" rx="1" fill="#242424" /><rect x="8" y="1" width="21.500" height="20" rx="1" fill="#fff" opacity=".85" /><path d="M8 8h14v13H8z" fill="#c9c6c6" /></svg></div>
        <div><svg viewBox="0 0 36 34" className="h-[34px] w-9"><circle cx="19" cy="11" r="6" fill="#7b83eb" /><path d="M12 14h14v12a7 7 0 0 1-14 0z" fill="#7b83eb" /><path d="M24 14h6v9a5 5 0 0 1-6 5z" fill="#5059c9" /><rect x="3" y="13" width="15" height="15" rx="1" fill="#fff" /></svg><span className="absolute top-[19px] left-[15px] text-[14px] leading-[16px] font-bold text-[#4b53bc]">T</span><span className="absolute top-[2px] left-[29px] flex size-5 items-center justify-center rounded-full bg-[#0a74d0] text-[14px] text-white">1</span></div>
        <div><svg viewBox="0 0 31 28" className="h-[28px] w-[31px]"><path d="M0 2.500A1.500 1.500 0 0 1 1.500 1H10l3 3v6H0z" fill="#e0a010" /><path d="M0 7h11l3-3h15.500A1.500 1.500 0 0 1 31 5.500V27H0z" fill="#ffcf45" /><path d="M0 12l31-3v18H0z" fill="#fcc22f" /><path d="M6 27v-4a3 3 0 0 1 3-3h14a3 3 0 0 1 3 3v4z" fill="#1180d8" /><path d="M9 23.500h13" stroke="#0a4f94" /></svg></div>
        <div><span className="absolute left-[4px] h-12 w-12 rounded-[5px] border border-[#e6d4d6] bg-[#faeef0]" /><span className="absolute left-[4px] h-12 w-[44px] rounded-[5px] border border-[#e6d4d6] bg-[#fbf0f2]" /><Edge className="z-10 -mt-px size-[29px]" id="e2" /><span className="absolute bottom-0 z-10 h-1 w-5 rounded-full bg-[#0078d4]" /></div>
        <div><svg viewBox="0 0 29 30" className="h-[30px] w-[29px]"><path d="M8 5V2.500A1.500 1.500 0 0 1 9.500 1h10A1.500 1.500 0 0 1 21 2.500V5" fill="none" stroke="#22b8f4" strokeWidth="2" /><path d="M0 6a1 1 0 0 1 1-1h27a1 1 0 0 1 1 1v19a4 4 0 0 1-4 4H4a4 4 0 0 1-4-4z" fill="#104a86" /><path d="M9 11.500h5.200v5.200H9z" fill="#f25022" /><path d="M15 11.500h5.200v5.200H15z" fill="#7fba00" /><path d="M9 17.500h5.200v5.200H9z" fill="#00a4ef" /><path d="M15 17.500h5.200v5.200H15z" fill="#ffb900" /></svg></div>
        <div><span className="flex size-[30px] items-center justify-center rounded-full border-2 border-black"><Fit className="w-[23px] font-['Liberation_Sans'] text-[9px] leading-[10px] font-bold [-webkit-text-stroke:0.400px_black]">DELL</Fit></span></div>
        <div><M365 className="h-[28px] w-[27px]" id="m2" /></div>
        <div><svg viewBox="0 0 31 29" className="h-[29px] w-[31px]"><rect x="4" y="7" width="27" height="21" rx="1.500" fill="#5c6066" /><path d="M4 26h27v1a1 1 0 0 1-1 1H5a1 1 0 0 1-1-1z" fill="#8a8f95" /><rect y="0" width="22" height="16" rx="1.500" fill="#20b4d4" /><path d="M3 4h16M5 8h13" stroke="#fff" strokeWidth="2" strokeDasharray="2 2.500" /><path d="M3 12.500h16" stroke="#fff" strokeWidth="2" /></svg></div>
        <div><svg viewBox="0 0 22 30" className="h-[30px] w-[22px]"><path d="M11 0c7 0 11 4.500 11 11 0 7-5 15-11 19C5 26 0 18 0 11 0 4.500 4 0 11 0z" fill="#272727" /><path d="M2 15c4 .5 6 2.500 7 6.500-4-.5-6.200-2.800-7-6.500zM20 15c-4 .5-6 2.500-7 6.500 4-.5 6.200-2.800 7-6.500z" fill="#f0dcdc" /></svg><span className="absolute bottom-0 h-1 w-2 rounded-full bg-[#8f8484]" /></div>
      </div>
      <Line className="ml-[130px] h-[8px] w-[14px]" box="0 0 14 8" sw={1.700}><path d="M1 7l6-6 6 6" /></Line>
      <Line className="ml-[26px] h-[20px] w-[14px] text-[#1c56a8]" box="0 0 14 20" sw={1.400}><rect x="3.800" y="1" width="6.400" height="12" rx="3.200" /><path d="M1 9.500a6 6 0 0 0 12 0M7 15.500V19" /></Line>
      <div className="-mt-[2px] ml-[27px] flex flex-col items-center leading-[20px] text-[#1c1c1c]"><Fit className="w-[29px]">ENG</Fit><Fit className="w-[15px]">IN</Fit></div>
      <Line className="ml-[23px] h-[16px] w-5 text-black" box="0 0 20 16" sw={1.500}><path d="M1 5.500a12.500 12.500 0 0 1 18 0" stroke="#c9b8b6" /><path d="M3.500 8.300a9 9 0 0 1 13 0M6 11a5.500 5.500 0 0 1 8 0" /><circle cx="10" cy="14" r="1.200" fill="currentColor" /></Line>
      <Line className="ml-[9px] h-[18px] w-[21px] text-black" box="0 0 21 18" sw={1.300}><path d="M1 6.500h3.500L9.500 2v14L4.500 11.500H1zM12 6.500c1 1.500 1 3.500 0 5M14.500 4c2.200 3 2.200 7 0 10M17 1.500c4 4.500 4 10.500 0 15" /></Line>
      <svg viewBox="0 0 21 17" className="-mt-px ml-[9px] h-[17px] w-[21px]"><path d="M5 3h11a2 2 0 0 1 2 2v8a2 2 0 0 1-2 2H3a2 2 0 0 1-2-2V9" fill="none" stroke="#111" strokeWidth="1.400" /><path d="M7 5h9v8H3V9h3zM18.500 7H20v4h-1.500z" /><path d="M4 0L0 5.500h2.500L1.500 9 6 4H3.500z" /></svg>
      <div className="-mt-[4px] ml-[18px] flex w-[78px] flex-col items-end leading-[20px] text-[#1c1c1c]"><Fit className="w-[36px]">12:28</Fit><Fit className="w-[78px]">21-06-2024</Fit></div>
      <svg viewBox="0 0 17 19" className="ml-[11px] h-[19px] w-[17px]" fill="#0a3f8c"><path d="M8.500 0A6.500 6.500 0 0 1 15 6.500V11l1.500 3v1.500H.5V14L2 11V6.500A6.500 6.500 0 0 1 8.500 0zM5.500 16.500h6a3 3 0 0 1-6 0z" /></svg>
      <div className="relative ml-[22px] h-[28px] w-[29px]"><Copilot className="h-[25px] w-[28px]" id="cw" warm /><span className="absolute right-0 -bottom-[1px] flex h-[9px] w-[22px] items-center justify-center rounded-[2px] bg-[#ffc814] text-[8px] font-black tracking-[0.500px]">PRE</span></div>
    </div>
  );
}

export default function App() {
  return (
    <div className="relative flex h-[1080px] w-[1920px] flex-col overflow-hidden bg-[#ffb9d0] font-['Noto_Sans',sans-serif] text-black">
      <TabBar />
      <Toolbar />
      <div className="flex h-[932px] shrink-0">
        <div className="flex w-[1865px] flex-col">
          <Bookmarks />
          <InfoBar />
          <div className="mt-[5px] ml-[5px] flex h-[819px] overflow-hidden rounded-[9px] bg-white shadow-[0_0_2px_rgba(120,40,70,0.400)]">
            <Panel />
            <Canvas />
            <div className="flex w-[19px] flex-col items-center bg-[#fcfcfc] pt-[10px]">
              <svg viewBox="0 0 13 10" className="h-[10px] w-[13px] shrink-0" fill="#8b8b8b"><path d="M6.500 0L13 8.500 12 10H1L0 8.500z" /></svg>
              <span className="mt-[288px] h-[480px] w-[11px] shrink-0 rounded-full bg-[#8b8b8b]" />
              <svg viewBox="0 0 13 10" className="mt-[11px] h-[10px] w-[13px] rotate-180" fill="#8b8b8b"><path d="M6.500 0L13 8.500 12 10H1L0 8.500z" /></svg>
            </div>
          </div>
        </div>
        <SideBar />
      </div>
      <TaskBar />
      <SharePopup />
      <Toast />
    </div>
  );
}
